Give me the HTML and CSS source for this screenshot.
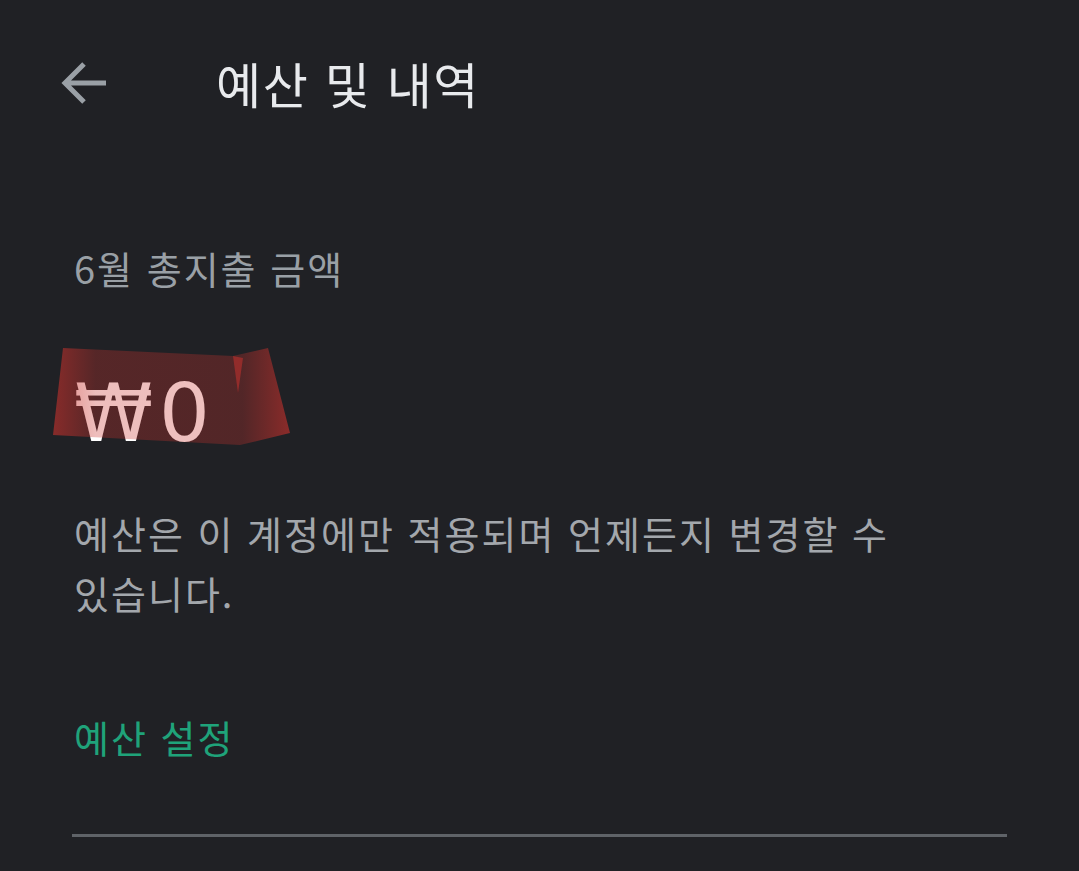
FILE: index.html
```html
<!DOCTYPE html>
<html lang="ko">
<head>
  <meta charset="UTF-8" />
  <meta name="viewport" content="width=device-width, initial-scale=1.0"/>
  <title>예산 및 내역</title>
  <link rel="stylesheet" href="styles.css">
</head>
<body>
  <header class="topbar">
    <svg class="back" width="48" height="48" viewBox="0 0 48 48">
      <path d="M46 24H5M24 5L5 24l19 19" fill="none" stroke="#9aa0a6" stroke-width="5"/>
    </svg>
    <h1 class="title">예산 및 내역</h1>
  </header>

  <main class="content">
    <div class="label">6월 총지출 금액</div>

    <div class="amount">
      <span>₩0</span>
      <svg class="mark" width="237" height="97" viewBox="0 0 237 97">
        <defs>
          <linearGradient id="redGrad" x1="0" x2="1" y1="0" y2="0">
            <stop offset="0" stop-color="rgb(205,50,45)" stop-opacity="0.6"/>
            <stop offset="0.18" stop-color="rgb(200,50,45)" stop-opacity="0.32"/>
            <stop offset="0.8" stop-color="rgb(200,50,45)" stop-opacity="0.3"/>
            <stop offset="1" stop-color="rgb(210,50,45)" stop-opacity="0.6"/>
          </linearGradient>
        </defs>
        <polygon points="10,0 180,8 215,0 237,85 187,97 0,87" fill="url(#redGrad)"/>
        <polygon points="180,8 190,10 185,45" fill="rgb(210,50,45)" fill-opacity="0.5"/>
      </svg>
    </div>

    <p class="desc">예산은 이 계정에만 적용되며 언제든지 변경할 수 있습니다.</p>

    <div class="link">예산 설정</div>

    <hr class="divider">
  </main>
</body>
</html>
```

FILE: styles.css
```css
body {
  margin: 0;
  background: #202125;
  font-family: "Noto Sans CJK KR", "Noto Sans", sans-serif;
  color: #9aa0a6;
  letter-spacing: 2px;
  word-break: keep-all;
}
.topbar {
  display: flex;
  align-items: center;
  height: 166px;
  padding-left: 60px;
}
.back {
  display: block;
}
.title {
  margin: 0 0 0 108px;
  font-size: 49px;
  font-weight: 400;
  line-height: 48px;
  letter-spacing: 1.6px;
  color: #e8eaed;
}
.content {
  padding: 0 72px 0 72px;
}
.label {
  margin-top: 78px;
  padding-left: 2px;
  font-size: 38px;
  line-height: 48px;
}
.amount {
  position: relative;
  display: inline-block;
  margin-top: 82px;
  padding-left: 2px;
  font-family: "DejaVu Sans", "Noto Sans CJK KR", sans-serif;
  font-size: 80px;
  line-height: 80px;
  letter-spacing: 6px;
  color: #ffffff;
}
.mark {
  position: absolute;
  left: -19px;
  top: -26px;
}
.desc {
  margin: 49px 0 0 0;
  padding-left: 2px;
  font-size: 38px;
  line-height: 60px;
  color: #a3a7ac;
}
.link {
  margin-top: 90px;
  padding-left: 2px;
  font-size: 38px;
  line-height: 48px;
  color: #1fa37a;
}
.divider {
  margin: 73px 0 0 0;
  height: 3px;
  border: none;
  background: #5f6368;
}
```
